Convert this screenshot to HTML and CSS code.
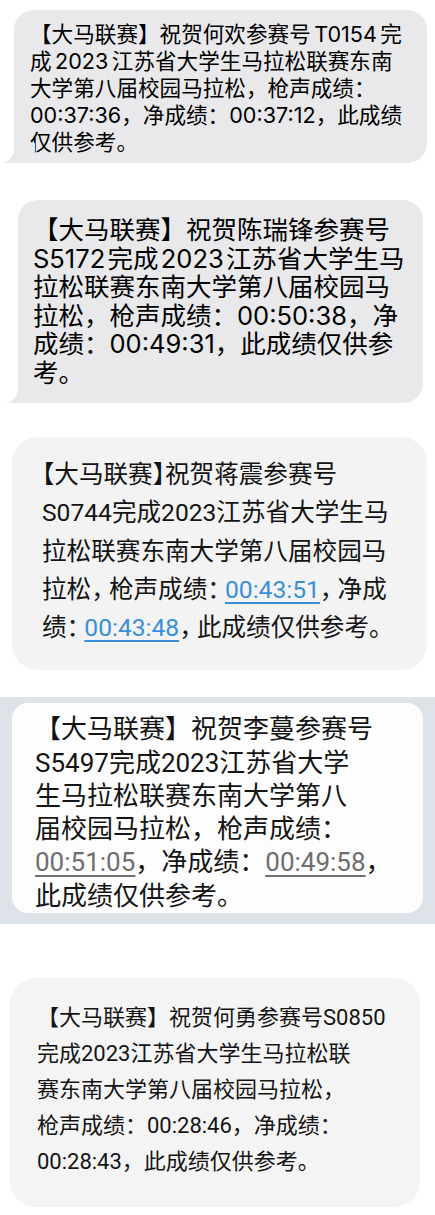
FILE: index.html
```html
<!DOCTYPE html>
<html lang="zh-CN">
<head>
<meta charset="utf-8">
<title>大马联赛 短信</title>
<link rel="stylesheet" href="styles.css">
</head>
<body>
<main class="page">
  <section class="shot shot-1">
    <div class="bubble ios b1">
      <p class="msg">【大马联赛】祝贺何欢参赛号<span class="lat">T0154</span>完<br>成<span class="lat">2023</span>江苏省大学生马拉松联赛东南<br>大学第八届校园马拉松，枪声成绩：<br>00:37:36，净成绩：00:37:12，此成绩<br>仅供参考。</p>
    </div>
  </section>

  <section class="shot shot-2">
    <div class="bubble ios b2">
      <p class="msg">【大马联赛】祝贺陈瑞锋参赛号<br><span class="lat first">S5172</span>完成<span class="lat">2023</span>江苏省大学生马<br>拉松联赛东南大学第八届校园马<br>拉松，枪声成绩：00:50:38，净<br>成绩：00:49:31，此成绩仅供参<br>考。</p>
    </div>
  </section>

  <section class="shot shot-3">
    <div class="bubble droid b3">
      <p class="msg"><span class="br">【</span>大马联赛<span class="br">】</span>祝贺蒋震参赛号<br>S0744完成2023江苏省大学生马<br>拉松联赛东南大学第八届校园马<br>拉松<span class="hp">，</span>枪声成绩<span class="hp">：</span><a class="num link-blue">00:43:51</a><span class="hp">，</span>净成<br>绩<span class="hp">：</span><a class="num link-blue">00:43:48</a><span class="hp">，</span>此成绩仅供参考。</p>
    </div>
  </section>

  <section class="shot shot-4">
    <div class="frame">
      <div class="bubble droid b4">
        <p class="msg">【大马联赛】祝贺李蔓参赛号<br>S5497完成2023江苏省大学<br>生马拉松联赛东南大学第八<br>届校园马拉松，枪声成绩：<br><a class="num link-gray">00:51:05</a>，净成绩：<a class="num link-gray">00:49:58</a>，<br>此成绩仅供参考。</p>
      </div>
    </div>
  </section>

  <section class="shot shot-5">
    <div class="bubble droid b5">
      <p class="msg">【大马联赛】祝贺何勇参赛号S0850<br>完成2023江苏省大学生马拉松联<br>赛东南大学第八届校园马拉松，<br>枪声成绩：00:28:46，净成绩：<br>00:28:43，此成绩仅供参考。</p>
    </div>
  </section>
</main>
</body>
</html>
```
FILE: styles.css
```css
html, body {
  margin: 0;
  padding: 0;
  background: #ffffff;
}

body {
  width: 435px;
  height: 1215px;
  overflow: hidden;
}

.page {
  display: flex;
  flex-direction: column;
}

.msg {
  margin: 0;
  white-space: nowrap;
}

.bubble {
  position: relative;
  box-sizing: border-box;
}

/* iOS style grey bubbles with tail */
.ios {
  background: #e9e9eb;
  border-radius: 20px;
  color: #000;
  font-family: "Inter", "Noto Sans CJK SC", sans-serif;
}

.ios::before {
  content: "";
  position: absolute;
  left: -11px;
  bottom: 0;
  width: 32px;
  height: 20px;
  background: #e9e9eb;
}

.ios::after {
  content: "";
  position: absolute;
  left: -30px;
  bottom: 0;
  width: 30px;
  height: 21px;
  background: #ffffff;
  border-bottom-right-radius: 14px;
}

.shot-1 {
  padding-top: 10px;
}

.b1 {
  margin-left: 14px;
  width: 413px;
  padding: 11px 0 7px 16px;
  font-size: 21.6px;
  line-height: 27px;
}

.b1 .lat {
  margin: 0 0.16em;
}

.shot-2 {
  margin-top: 37px;
}

.b2 {
  margin-left: 18px;
  width: 405px;
  padding: 16px 0 16px 15px;
  font-size: 25.5px;
  line-height: 28.5px;
}

.b2 .lat {
  margin: 0 0.09em;
}

.b2 .lat.first {
  margin-left: 0;
}

/* Android style bubbles */
.droid {
  color: #141414;
  font-family: "Roboto", "Noto Sans CJK SC", sans-serif;
}

.shot-3 {
  margin-top: 34px;
}

.b3 {
  margin-left: 12px;
  width: 415px;
  background: #f3f3f3;
  border-radius: 26px;
  padding: 19px 0 23px 30px;
  font-size: 24.6px;
  line-height: 38.25px;
}

.br {
  font-feature-settings: "halt";
}

.hp {
  font-feature-settings: "halt";
  margin-right: 0.22em;
}

.shot-4 {
  margin-top: 27px;
}

.frame {
  background: #dde3e8;
  padding: 6px 12px 11px 12px;
}

.b4 {
  background: #fdfdfd;
  border-radius: 16px;
  padding: 10px 0 0 23px;
  font-size: 26px;
  line-height: 33.3px;
}

.shot-5 {
  margin-top: 54px;
}

.b5 {
  margin-left: 10px;
  width: 410px;
  background: #f4f4f4;
  border-radius: 26px;
  padding: 22px 0 27px 27px;
  font-size: 22px;
  line-height: 36px;
}

.num {
  text-decoration: underline;
  text-underline-offset: 4px;
}

.link-blue {
  color: #3a8fd8;
  text-decoration-thickness: 1.5px;
}

.link-gray {
  color: #6e6e70;
  text-decoration-thickness: 1.5px;
}
```
